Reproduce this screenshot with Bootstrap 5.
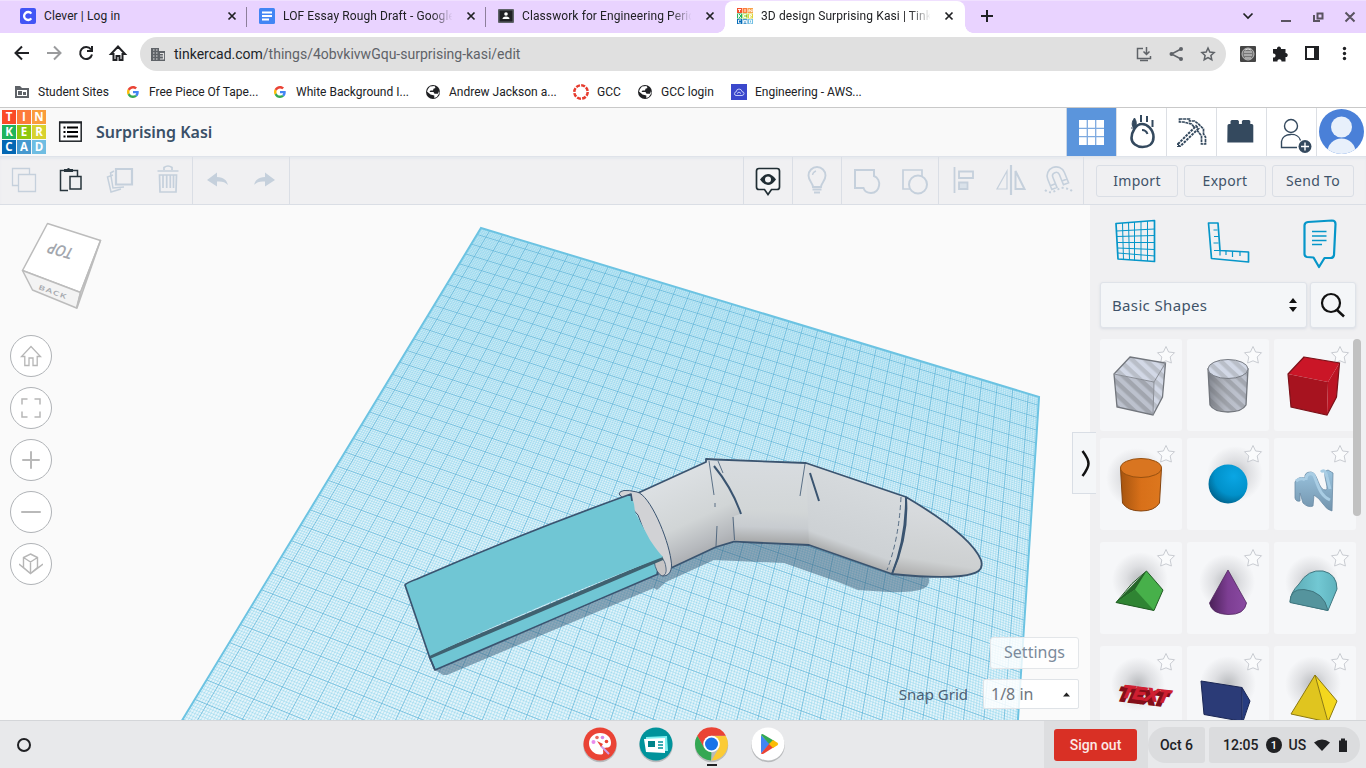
<!DOCTYPE html>
<html lang="en">
<head>
<meta charset="utf-8">
<meta name="viewport" content="width=device-width, initial-scale=1">
<title>3D design Surprising Kasi | Tinkercad</title>
<link href="https://cdn.jsdelivr.net/npm/bootstrap@5.3.0/dist/css/bootstrap.min.css" rel="stylesheet">
<style>
body{font-family:Roboto,sans-serif;font-size:12px;line-height:16px;color:#202124;height:768px;overflow:hidden;background:#fff}
svg{display:block;flex:none}
.tabstrip{height:33px;background:#e9d3ff;border-top:1px solid #f0e0ff;padding-left:8px}
.tab{width:239px;padding:0 7px 2px 12px;position:relative}
.tab .label{flex:1;white-space:nowrap;overflow:hidden;letter-spacing:.1px;mask-image:linear-gradient(90deg,#000 86%,transparent 98%);-webkit-mask-image:linear-gradient(90deg,#000 86%,transparent 98%);margin-right:7px}
.tab .label.full{mask-image:none;-webkit-mask-image:none}
.tab.divided::after{content:"";position:absolute;right:0;top:6px;height:20px;width:1px;background:#8d7f9b}
.tab.active-tab{background:#fff;border-radius:8px 8px 0 0;width:240px;padding-right:8px}
.tab.active-tab::before,.tab.active-tab::after{content:"";position:absolute;bottom:0;width:8px;height:8px}
.tab.active-tab::before{left:-8px;background:radial-gradient(circle at 0 0,transparent 7.5px,#fff 8px)}
.tab.active-tab::after{right:-8px;background:radial-gradient(circle at 100% 0,transparent 7.5px,#fff 8px)}
.addressbar{height:42px;padding-left:12px}
.omni{width:1086px;height:34px;border-radius:17px;background:#e0e0e0;font-size:14px;color:#5f6368;padding:0 9px 0 10px}
.bookmarks{height:32px;display:grid;grid-template-columns:111px 147px 153px 148px 64px 94px 140px;padding-left:14px;align-items:center;padding-top:3px;padding-bottom:1px}
.apphead{height:49px;background:#f9f9f9;border-top:1px solid #c9c9c9;font-family:"Noto Sans",sans-serif}
.logo{display:grid;grid-template-columns:repeat(3,14px);grid-auto-rows:14px;gap:1px;margin-left:2px;width:44px}
.logo b{color:#fff;font:700 11.5px/14px "Open Sans",sans-serif;text-align:center}
.ttl{font-size:16px;font-weight:600;color:#3a5068;line-height:22px;letter-spacing:0;margin-left:14px}
.hb{width:50px;height:48px;background:#fff;border-left:1px solid #dcdfe4}
.hb.on{background:#5b95dc;border-left:1px solid #c9d6e6}
.toolrow{height:49px;background:#f0f0f2;border-bottom:1px solid #dadee5;border-top:1px solid #dfe3ea;font-family:"Noto Sans",sans-serif;color:#c5d0dc;box-shadow:inset 0 2px 2px #e6e9ee}
.tg{border-right:1px solid #dadee5}
.tg>svg{width:48px;height:47px}
.tbtn{font-size:14px;line-height:20px;color:#3f5369;border:1px solid #dadee5;border-radius:3px;height:32px;padding:0;background:#f0f0f2;width:82px;letter-spacing:.3px}
.stage{height:515px;background:#fafafa;font-family:"Noto Sans",sans-serif}
.view{width:1090px;position:relative;overflow:hidden}
.navs{position:absolute;left:10px;top:130px;gap:10px}
.nb{width:42px;height:42px;border:1px solid #b0b3b7;border-radius:50%;background:#fff;display:grid;place-items:center}
.collapser{position:absolute;left:1072px;top:227px;width:24px;height:62px;background:#f4f6f8;border:1px solid #d9dee5;border-right:0;z-index:3}
.snap{position:absolute;right:11px;top:432px;font-size:16px;color:#4b5f74}
.snap .setb{width:89px;height:32px;background:rgba(255,255,255,.8);border:1px solid #e3e6e9;border-radius:3px;color:#7b8a9b;line-height:28px;text-align:center}
.snap .inp{width:96px;height:30px;background:rgba(255,255,255,.85);border:1px solid #dfe3e7;border-radius:2px;line-height:28px;color:#707780;padding:0 8px 0 7px}
.side{width:276px;background:#f0f0f2;padding-left:10px;position:relative;overflow:hidden}
.selbox{width:207px;height:46px;background:#f4f6f8;border:1px solid #dfe3e9;border-radius:3px;box-shadow:0 1px 3px #d8dce3;font-size:15px;line-height:20px;color:#3f5369;padding:0 8px 0 11px;letter-spacing:.35px}
.srch{width:46px;height:46px;background:#f4f6f8;border:1px solid #dfe3e9;border-radius:3px;box-shadow:0 1px 3px #d8dce3}
.shapes{display:grid;grid-template-columns:repeat(3,82px);grid-template-rows:92px 92px 92px 92px;column-gap:5px;row-gap:12px}
.shapes>div{background:#f6f7f9;border-radius:3px}
.shapes>div:nth-child(-n+3){margin-bottom:0}
.shapes.first{grid-template-rows:92px;margin-bottom:7px}
.sbar{position:absolute;left:263px;top:134px;width:8px;height:177px;border-radius:4px;background:#c1c1c1}
.shelf{height:48px;background:#e8e9eb;border-top:1px solid #d4d6d9;font-size:14px;font-weight:500;line-height:20px}
.signarea{background:#dddee0;width:104px;padding-left:10px}
.signout{width:83px;height:32px;background:#d93025;color:#fce8e6;border-radius:3px;text-align:center;line-height:32px}
.pill{background:#dbdcde;height:36px}
.apps{margin-left:559px;gap:20px}
</style>
</head>
<body class="d-flex flex-column">
<svg width="0" height="0" class="position-absolute"><defs>
<symbol id="x" viewBox="0 0 16 16"><path d="M4.5 4.5l7 7M11.500 4.500l-7 7" stroke="#202124" stroke-width="1.700"/></symbol>
<symbol id="g" viewBox="0 0 48 48"><path fill="#EA4335" d="M24 9.500c3.540 0 6.710 1.220 9.210 3.600l6.850-6.850C35.900 2.380 30.470 0 24 0 14.620 0 6.510 5.380 2.560 13.220l7.980 6.190C12.430 13.720 17.740 9.500 24 9.500z"/><path fill="#4285F4" d="M46.980 24.550c0-1.570-.15-3.090-.38-4.550H24v9.020h12.940c-.58 2.960-2.260 5.480-4.780 7.180l7.730 6c4.510-4.180 7.090-10.360 7.090-17.650z"/><path fill="#FBBC05" d="M10.530 28.590A14.500 14.500 0 0 1 9.770 24c0-1.600.27-3.140.76-4.590l-7.980-6.190A23.900 23.900 0 0 0 0 24c0 3.880.92 7.540 2.560 10.780z"/><path fill="#34A853" d="M24 48c6.480 0 11.930-2.130 15.890-5.810l-7.730-6c-2.150 1.450-4.920 2.300-8.160 2.300-6.260 0-11.570-4.220-13.470-9.910l-7.980 6.190C6.510 42.620 14.620 48 24 48z"/></symbol>
<symbol id="globe" viewBox="0 0 16 16"><circle cx="8" cy="8" r="7" fill="#202124"/><path d="M5 2.500L9.500 2l1 2-2 .7-.5 1.800H5.500L4.500 8h4l1 1.700h3.600L14 7l.5 2-2.700 4-2.500 1v-2.500L5.500 10.500 2 7.500 3 5z" fill="#fff"/></symbol>
<symbol id="star" viewBox="0 0 20 20"><path d="M10 1.500l2.600 5.500 5.900.7-4.300 4.300L15.400 18 10 15.800 4.600 18l1.200-6L1.500 7.700l5.900-.7z" fill="#fafbfc" stroke="#c9ccd2" stroke-width="1"/></symbol>
<pattern id="hole" width="9" height="9" patternUnits="userSpaceOnUse" patternTransform="rotate(-47)"><rect width="9" height="9" fill="#a1a5ae"/><rect width="4.500" height="9" fill="#bcc1cd"/></pattern>
<pattern id="holeL" width="9" height="9" patternUnits="userSpaceOnUse" patternTransform="rotate(-47)"><rect width="9" height="9" fill="#b9bec8"/><rect width="4.500" height="9" fill="#d2d8e6"/></pattern>
<radialGradient id="sh"><stop offset="0" stop-color="#b9bbbe"/><stop offset=".5" stop-color="#dedfe2"/><stop offset="1" stop-color="#f6f7f9"/></radialGradient>
<linearGradient id="or"><stop offset="0" stop-color="#a5540f"/><stop offset=".5" stop-color="#d87019"/><stop offset="1" stop-color="#dd771e"/></linearGradient>
<linearGradient id="pu"><stop offset="0" stop-color="#4b2158"/><stop offset=".5" stop-color="#7d3e93"/><stop offset="1" stop-color="#8a4aa2"/></linearGradient>
<linearGradient id="te"><stop offset="0" stop-color="#5ba8b2"/><stop offset=".6" stop-color="#72c8d3"/><stop offset="1" stop-color="#5fb2bd"/></linearGradient>
<linearGradient id="cy"><stop offset="0" stop-color="#60646c" stop-opacity=".65"/><stop offset=".5" stop-color="#888" stop-opacity=".1"/><stop offset="1" stop-color="#fff" stop-opacity="0"/></linearGradient>
<linearGradient id="sq" x2="0" y2="1"><stop offset="0" stop-color="#9ac4df"/><stop offset="1" stop-color="#7394ad"/></linearGradient>
<radialGradient id="bl" cx=".65" cy=".3" r=".75"><stop offset="0" stop-color="#0aa6e4"/><stop offset=".65" stop-color="#0191ca"/><stop offset="1" stop-color="#00638d"/></radialGradient>
</defs></svg>

<div class="tabstrip d-flex flex-none">
  <div class="tab divided d-flex align-items-center"><svg width="16" height="16"><rect width="16" height="16" rx="2" fill="#4255f5"/><path d="M11.300 5.600A4 4 0 1 0 11.300 10.400" fill="none" stroke="#fff" stroke-width="2.300"/></svg><span class="label full ms-2">Clever | Log in</span><svg width="16" height="16"><use href="#x"/></svg></div>
  <div class="tab divided d-flex align-items-center"><svg width="16" height="16"><rect width="16" height="16" rx="1.500" fill="#4285f4"/><path d="M3 4.500h10M3 8h10M3 11.500h7" stroke="#fff" stroke-width="1.800"/></svg><span class="label ms-2">LOF Essay Rough Draft - Google Docs</span><svg width="16" height="16"><use href="#x"/></svg></div>
  <div class="tab d-flex align-items-center"><svg width="16" height="16"><rect y="1" width="16" height="14" rx="1" fill="#5f6368"/><rect x="1.500" y="2.500" width="13" height="11" fill="#202124"/><circle cx="8" cy="6" r="1.800" fill="#fff"/><path d="M4.500 11q0-2.500 3.500-2.500t3.500 2.500z" fill="#fff"/></svg><span class="label ms-2">Classwork for Engineering Period 4</span><svg width="16" height="16"><use href="#x"/></svg></div>
  <div class="tab active-tab d-flex align-items-center"><svg width="16" height="16"><path fill="#f2512e" d="M0 0h5v5H0z"/><path fill="#fc7e3b" d="M5.500 0h5v5h-5z"/><path fill="#f8a24a" d="M11 0h5v5h-5z"/><path fill="#27b35f" d="M0 5.500h5v5H0z"/><path fill="#92c81e" d="M5.500 5.500h5v5h-5z"/><path fill="#ddd43b" d="M11 5.500h5v5h-5z"/><path fill="#066cb8" d="M0 11h5v5H0z"/><path fill="#4a9bd0" d="M5.500 11h5v5h-5z"/><path fill="#72bfe3" d="M11 11h5v5h-5z"/><path d="M1 1.500h3M2.500 1.500V4M8 1v3M12 4V1.500L15 4V1M1.500 6v4M4 6L2 8l2 2M9.500 6.500h-3v3h3M6.500 8h2.500M12.500 10V6.500h2v1.500h-2l2 2M4 12H1.500v3H4M6.500 15.500v-3h3v3M6.500 14h3M12.500 12h2v3h-2z" fill="none" stroke="#fff" stroke-width=".9"/></svg><span class="label ms-2">3D design Surprising Kasi | Tinkercad</span><svg width="16" height="16"><use href="#x"/></svg></div>
  <svg width="401" height="32" viewBox="965 1 401 32"><path d="M981 16h12M987 10v12" stroke="#202124" stroke-width="2"/><path d="M1243.500 13.500l4.500 4.500 4.500-4.500" fill="none" stroke="#202124" stroke-width="1.700"/><path d="M1281 21h10M1314 15v6h6M1317.500 13.500h5v5h-5zM1345.500 12.500l9 9M1354.500 12.500l-9 9" fill="none" stroke="#5a5360" stroke-width="2"/></svg>
</div>

<div class="addressbar d-flex align-items-center">
  <svg width="128" height="42" viewBox="12 33 128 42"><g fill="none" stroke="#202124" stroke-width="2"><path d="M29 53H16M22 46.500L15.500 53l6.500 6.500"/><path stroke="#9a9b9d" d="M47 53h13M54 46.500l6.500 6.500-6.500 6.500"/><path d="M91 49.500A6 6 0 1 0 92 54.500M92 46v5h-5"/><path d="M113.500 60v-6h-2.500l7-7.500 7 7.500h-2.500v6h-3v-4h-3v4z"/></g></svg>
  <div class="omni d-flex align-items-center"><svg width="16" height="16" viewBox="0 0 16 16"><path fill="#5f6368" d="M1 2h8v3h6v10H1z"/><path d="M3 4h1.500M6 4h1.500M3 7h1.500M6 7h1.500M3 10h1.500M6 10h1.500M3 13h1.500M6 13h1.500M10 7.500h3.500v5.500H10M10 10h3.500" fill="none" stroke="#e0e0e0" stroke-width="1.200"/></svg><span class="flex-grow-1" style="padding-left:8px"><span class="text-dark">tinkercad.com</span>/things/4obvkivwGqu-surprising-kasi/edit</span>
  <svg width="82" height="18" viewBox="1135 45 82 18"><g fill="none" stroke="#5f6368" stroke-width="1.500"><path d="M1143 48.500h-5.500v10h13v-2.500M1140 60.500h8M1146.500 47v7M1143.500 51.500l3 3 3-3"/><path d="M1181 49l-9.500 5 9.500 5"/><path d="M1208 48l1.800 4 4.300.5-3.200 2.900.9 4.300-3.800-2.200-3.800 2.200.9-4.300-3.200-2.900 4.300-.5z"/></g><g fill="#5f6368"><circle cx="1181" cy="49" r="2"/><circle cx="1171.500" cy="54" r="2"/><circle cx="1181" cy="59" r="2"/></g></svg></div>
  <svg width="140" height="42" viewBox="1226 33 140 42"><rect x="1240" y="46" width="16" height="16" rx="1" fill="#454545"/><circle cx="1248" cy="54" r="6" fill="#777" stroke="#bbb"/><path d="M1244 52h8M1244 55h8M1245 58h6M1245 50q3-2 6 0" stroke="#ddd" fill="none"/><path fill="#202124" d="M1273 49h4c-.5-3.500 4.500-3.500 4 0h4.500v4c3-.3 3 4.500 0 4v4.500h-4c.3-3-4.500-3-4 0H1273v-4c3.500.5 3.500-4.500 0-4z"/><path d="M1306 47h12v12h-12z" fill="#fff" stroke="#202124" stroke-width="2"/><path d="M1314 47h4v12h-4z" fill="#202124"/><g fill="#202124"><circle cx="1344.500" cy="48.500" r="1.700"/><circle cx="1344.500" cy="53.500" r="1.700"/><circle cx="1344.500" cy="58.500" r="1.700"/></g></svg>
</div>

<div class="bookmarks">
  <div class="d-flex gap-2"><svg width="16" height="16"><path d="M1 2h5l2 2h7v10H1z" fill="#5f6368"/><path d="M3 6h10v6H3z" fill="#fff"/><path d="M4 7h4v4H4zM9 8h3v3H9z" fill="#5f6368"/></svg><span>Student Sites</span></div>
  <div class="d-flex gap-2"><svg width="16" height="16"><use href="#g" x="2" y="2" width="12" height="12"/></svg><span>Free Piece Of Tape...</span></div>
  <div class="d-flex gap-2"><svg width="16" height="16"><use href="#g" x="2" y="2" width="12" height="12"/></svg><span>White Background I...</span></div>
  <div class="d-flex gap-2"><svg width="16" height="16"><use href="#globe"/></svg><span>Andrew Jackson a...</span></div>
  <div class="d-flex gap-2"><svg width="16" height="16"><circle cx="8" cy="8" r="6.700" fill="none" stroke="#e63b2e" stroke-width="2.500" stroke-dasharray="4 1.260"/></svg><span>GCC</span></div>
  <div class="d-flex gap-2"><svg width="16" height="16"><use href="#globe"/></svg><span>GCC login</span></div>
  <div class="d-flex gap-2"><svg width="16" height="16"><rect width="16" height="16" fill="#3b48cc"/><path d="M5 11.500h6q2-.3 2-2t-2-1.900Q10.500 5 8 5T5.300 7.700Q3.500 8 3.500 9.700T5 11.500zM6 9.500l2-1.500 2 1.500" fill="none" stroke="#c5cdf8"/></svg><span>Engineering - AWS...</span></div>
</div>

<div class="apphead d-flex align-items-center">
  <div class="logo" id="logo"></div>
  <svg class="ms-2" width="32" height="32" viewBox="54 115 32 32"><rect x="59.700" y="121.200" width="21.500" height="19" fill="#fff" stroke="#202428" stroke-width="1.500"/><path d="M59 121.500h23" stroke="#202428" stroke-width="2"/><path d="M67 126.500h11M67 131h11M67 135.500h11M63.500 126.500h2M63.500 131h2M63.500 135.500h2" stroke="#000" stroke-width="2"/></svg>
  <span class="ttl me-auto" id="ttl" style="margin-left:10px">Surprising Kasi</span>
  <div class="hb on"><svg width="49" height="48"><path d="M12 12h25v25H12z" fill="#fff"/><path d="M20.300 12v25M28.700 12v25M12 20.300h25M12 28.700h25" stroke="#7eaae0" stroke-width="1.300"/></svg></div>
  <div class="hb"><svg width="49" height="48" viewBox="1117 108 49 48"><path d="M1142 124c5 0 11.500 5.500 11.500 13s-5.500 10-11 10-11-3.500-11-9 4-14 10.500-14z" fill="none" stroke="#34495e" stroke-width="2.600"/><path d="M1142 130q4 0 5.500 4M1141 115v7M1147 116v6M1152.500 120v7" stroke="#34495e" stroke-width="2" fill="none"/><path d="M1134.500 118c-3 4-3 8-.5 10 3-2 3-6 .5-10zM1131 128h5" fill="#34495e" stroke="#34495e"/></svg></div>
  <div class="hb"><svg width="49" height="48" viewBox="1167 108 49 48"><path d="M1179.500 119h10v2h5l4 3 5 5v5l2 3v7h-4v-8l-3-4-7-8-8-2h-4z" fill="#fff" stroke="#34495e" stroke-width="1.700" stroke-dasharray="3 .6"/><path d="M1178 144l18-18 2.500 2.500-18 17.500h-2.500z" fill="#fff" stroke="#34495e" stroke-width="2" stroke-dasharray="2.600 1"/></svg></div>
  <div class="hb"><svg width="49" height="48" viewBox="1217 108 49 48"><path d="M1228 126q0-1.500 1.500-1.500h1.500v-3l1.200-1h6l1.200 1v3h3v-3l1.200-1h6l1.200 1v3h1.500q1.500 0 1.500 1.500v17h-26z" fill="#34495e" transform="translate(-.5 -.5)"/></svg></div>
  <div class="hb"><svg width="49" height="48" viewBox="1267 108 49 48"><g fill="none" stroke="#34495e" stroke-width="1.400"><circle cx="1291" cy="126" r="6.500"/><path d="M1297 147.500h-15.500v-6c1-9 17-9.500 19-1"/></g><circle cx="1305" cy="146.500" r="6.500" fill="#34495e"/><path d="M1301 146.500h8M1305 142.500v8" stroke="#fff" stroke-width="1.400"/></svg></div>
  <div class="hb"><svg width="49" height="48" viewBox="1317 108 49 48"><clipPath id="av"><circle cx="1341.500" cy="131.500" r="22.500"/></clipPath><g clip-path="url(#av)"><path fill="#4a80d8" d="M1317 108h49v48h-49z"/><circle cx="1341.500" cy="127" r="10.500" fill="#e8f0fb"/><ellipse cx="1341.500" cy="152" rx="14" ry="13.500" fill="#e8f0fb"/></g></svg></div>
</div>

<div class="toolrow d-flex">
  <div class="tg d-flex">
    <svg viewBox="0 157 48 47"><path d="M12.500 168.500h17v17h-17z" fill="none" stroke="#c5d0dc" stroke-width="1.300"/><path d="M18.500 174.500h17v17h-17z" fill="#f0f0f2" stroke="#c5d0dc" stroke-width="1.300"/></svg>
    <svg viewBox="48 157 48 47"><path d="M68 190.500h-7.500v-20h17v6M70 176.500h11v12.500H70z" fill="none" stroke="#27343c" stroke-width="1.500"/><path d="M64 172v-3h3q1.500-2 3 0h3v3z" fill="#27343c"/></svg>
    <svg viewBox="96 157 48 47"><path d="M113 175l-5.500 2 3.500 15 10-3M114 171l-3.500 2 2.500 15 11-1" fill="none" stroke="#c5d0dc" stroke-width="1.500"/><path d="M116 169h16v15.500h-16z" fill="#f0f0f2" stroke="#c5d0dc" stroke-width="2.200"/></svg>
    <svg viewBox="144 157 48 47"><path d="M157.500 171h21M164 170v-2.500q4-3 8 0v2.500M159.500 175l.5 17h16l.5-17z M163 175v13M166.700 175v13M170.300 175v13M173.500 175v13" fill="none" stroke="#c5d0dc" stroke-width="1.700"/></svg>
  </div>
  <div class="tg d-flex">
    <svg viewBox="193 157 48 47"><path d="M207 180l10-7.500v4.500c7 .5 10 3.500 11 8-3-3-6-4-11-3.500v5z" fill="#c5d0dc"/></svg>
    <svg viewBox="241 157 48 47"><path d="M275 180l-10-7.500v4.500c-7 .5-10 3.500-11 8 3-3 6-4 11-3.500v5z" fill="#c5d0dc"/></svg>
  </div>
  <div class="tg flex-grow-1"></div>
  <div class="tg d-flex"><svg viewBox="744 157 48 47"><path d="M759 168.500h18q2.500 0 2.500 2.500v16q0 2.500-2.500 2.500h-5.500l-3.500 5-3.500-5H759q-2.500 0-2.500-2.500v-16q0-2.500 2.500-2.500z" fill="#f5f6f7" stroke="#202e34" stroke-width="1.700"/><path d="M760 179.500q8-11 16 0-8 11-16 0z" fill="#202e34"/><circle cx="768" cy="179.500" r="3" fill="#f5f6f7"/></svg></div>
  <div class="tg d-flex"><svg viewBox="793 157 48 47"><path d="M813 187c0-4-4.500-6-4.500-11.500a8.500 8.500 0 0 1 17 0c0 5.500-4.500 7.500-4.500 11.500zM812.500 189.500h9M814 192.500h6" fill="none" stroke="#c5d0dc" stroke-width="1.900"/><path d="M812.500 175q.5-3 3.500-4" fill="none" stroke="#c5d0dc" stroke-width="1.400"/></svg></div>
  <div class="tg d-flex">
    <svg viewBox="842 157 48 47"><path d="M855 170h19v6c8 3 6.500 17-3 17-4 0-6.500-2-7.500-5H855z" fill="none" stroke="#c5d0dc" stroke-width="2"/></svg>
    <svg viewBox="891 157 48 47"><path d="M904 170h19v19h-19z" fill="none" stroke="#c5d0dc" stroke-width="1.700"/><circle cx="919" cy="184.500" r="9" fill="#f0f0f2" stroke="#c5d0dc" stroke-width="2"/></svg>
  </div>
  <div class="tg d-flex">
    <svg viewBox="939 157 48 47"><path d="M954.500 167v26M959 171.500h14v6.500h-14z" fill="none" stroke="#c5d0dc" stroke-width="1.800"/><path d="M959 182.500h8.500v6.500H959z" fill="#dae2ea" stroke="#c5d0dc" stroke-width="1.800"/></svg>
    <svg viewBox="987 157 48 47"><path d="M1011 165v30" stroke="#c5d0dc" stroke-width="2.200"/><path d="M1007 171v18h-10z" fill="none" stroke="#c5d0dc" stroke-width="1.200"/><path d="M1015.500 171v18h9z" fill="none" stroke="#c5d0dc" stroke-width="2"/></svg>
    <svg viewBox="1035 157 48 47"><g transform="rotate(-22 1056 177)" fill="none" stroke="#c5d0dc" stroke-width="1.600"><path d="M1047.500 187v-11a9 9 0 0 1 18 0v11h-5.500v-11q0-3.500-3.500-3.500t-3.500 3.500v11zM1047.500 183h5.500M1060 183h5.500"/></g><path d="M1045 190c8 7 14-5 20-1.500q5 0 8 3.500" fill="none" stroke="#c5d0dc" stroke-width="2" stroke-dasharray="2 2.500"/></svg>
  </div>
  <div class="d-flex align-items-center ps-2" style="width:282px;gap:6px"><button class="tbtn ms-1">Import</button><button class="tbtn">Export</button><button class="tbtn">Send To</button></div>
</div>

<div class="stage d-flex position-relative">
  <div class="view">
    <svg width="1090" height="515" viewBox="0 205 1090 515">
      <defs><linearGradient id="t1" gradientUnits="userSpaceOnUse" x1="674" y1="477" x2="710" y2="555"><stop offset="0" stop-color="#dce0e3"/><stop offset=".55" stop-color="#d1d5d6"/><stop offset=".85" stop-color="#b6b9bd"/><stop offset="1" stop-color="#a7a9ac"/></linearGradient>
      <linearGradient id="t2" gradientUnits="userSpaceOnUse" x1="770" y1="460" x2="767" y2="544"><stop offset="0" stop-color="#d8dce0"/><stop offset=".6" stop-color="#d2d6d7"/><stop offset=".8" stop-color="#c8ccd0"/><stop offset="1" stop-color="#a4a5a5"/></linearGradient>
      <linearGradient id="t3" gradientUnits="userSpaceOnUse" x1="865" y1="482" x2="838" y2="556"><stop offset="0" stop-color="#d6dadd"/><stop offset=".82" stop-color="#cdd1d4"/><stop offset="1" stop-color="#a9aaaa"/></linearGradient>
      <linearGradient id="t4" gradientUnits="userSpaceOnUse" x1="940" y1="515" x2="930" y2="577"><stop offset="0" stop-color="#d7dadd"/><stop offset=".75" stop-color="#cdd0d1"/><stop offset="1" stop-color="#b0b0b0"/></linearGradient></defs>
      <g id="plane"></g>
      <path d="M435 670l8 5 4 0 207-87 3 2 9-8 48-22 70 3 54 19 20 8 30 2q30 1 38-5 4-3 3-9L893 570 809 543 725 543 600 600z" fill="#3f5f7a" fill-opacity=".52"/>
      <g stroke="#3a5470" stroke-linejoin="round">
      <path d="M632 496l74-35 0-3 10 1 24 54-5 28-19 6-45 21z" fill="url(#t1)" stroke="none"/>
      <path d="M706 458l100 5 8 20-4 62-75-3-1-26 7-2z" fill="url(#t2)" stroke="none"/>
      <path d="M806 463l100 34-3 42-11 35-83-29z" fill="url(#t3)" stroke="none"/>
      <path d="M906 497C945 520 974 543 981 560c3 10-3 14-20 16-18 2-40 1-69-2q14-35 14-77z" fill="url(#t4)" stroke-width="1.800"/>
      <path d="M638 493l68-31 0-3 9 .5 91 3.500 100 34M892 574l-83-29-75-3.300-18 5.300-45 21" fill="none" stroke-width="1.800"/>
      <path d="M619 494q1-6 18-2c13 3 31 46 34 68 2 11-2 16-8 16-5-1-7-8-8-16L638 515z" fill="#d1d2d5" stroke-width="1"/>
      <path d="M654 560l4 15M658 561l1 9" fill="none" stroke-width="1.500"/>
      <path d="M714 466q18 22 27 48M810 473l9 28" fill="none" stroke-width="2"/><path d="M709 461l5 34M718 461l5 12M715 503v4M733 517l1.500 23M805 464l-5 32M716 546l1-20" fill="none" stroke-width=".8"/><path d="M901 497q-2 42-14 73" fill="none" stroke-width=".8" stroke-dasharray="5 3"/>
      <path d="M906 497q3 38-14 77" fill="none" stroke-width="1.800"/>
      <path d="M429.500 657L660 559l-3 15.500L435 670z" fill="#70c6d4" stroke-width="1.700"/>
      <path d="M654 561q2 12 8 15 5-1 4-8-1-8-4-9z" fill="#c6c4c5" stroke-width=".8"/>
      <path d="M429.500 657L663 558" stroke="#3f6170" stroke-width="4"/>
      <path d="M405 585q0-1 12-6Q520 534 631 494l3 10 1 8 15 28q8 12 13 17Q540 604 429.500 656z" fill="#70c6d4" stroke="none"/>
      <path d="M632 501l-1-7Q520 534 417 579q-11 4-12 6l24.500 72 5.500 13" fill="none" stroke-width="1.700"/>
      </g>
      <g stroke="#bcbcbc" stroke-width="1.500" stroke-linejoin="round"><path d="M47.500 223.500l53 17-20 52-58-22z" fill="#fff"/><path d="M22.500 270.500l58 22-4 15.500-44-18z" fill="#f3f3f3"/><path d="M100.500 240.500L77 308l3.500-15.500z" fill="#ddd"/></g>
      <text transform="matrix(-.93 -.28 -.25 .88 74 262)" font-size="0"></text>
      <text transform="translate(75 249) rotate(196) skewX(-12)" font-size="16" font-weight="600" fill="#a3a7ae" textLength="25" lengthAdjust="spacingAndGlyphs">TOP</text>
      <text transform="translate(38 289) rotate(20) scale(1 .65)" font-size="10" font-weight="600" fill="#a8abb0" textLength="29">BACK</text>
    </svg>
    <div class="navs d-flex flex-column">
      <div class="nb"><svg width="24" height="24"><path d="M12 2.500l9.500 10h-3.300v9h-4.200v-7.500h-4v7.500H5.800v-9H2.500z" fill="none" stroke="#b6b6b6" stroke-width="1.300"/></svg></div>
      <div class="nb"><svg width="24" height="24"><path d="M3 8.500V3h5.500M15.500 3H21v5.500M21 15.500V21h-5.500M8.500 21H3v-5.500" fill="none" stroke="#b6b6b6" stroke-width="1.500"/></svg></div>
      <div class="nb"><svg width="24" height="24"><path d="M4 12h16M12 4v16" stroke="#b9b9b9" stroke-width="2" stroke-linecap="round"/></svg></div>
      <div class="nb"><svg width="24" height="24"><path d="M3 12h18" stroke="#b9b9b9" stroke-width="2" stroke-linecap="round"/></svg></div>
      <div class="nb"><svg width="24" height="24"><path d="M11.500 2l7 3.500v10l-7 6-7-6v-10zM4.500 5.500l7 4.500 7-4.500M11.500 10v11.500M0 12l11.500 9.500L24 12" fill="none" stroke="#b6b6b6" stroke-width="1.400"/></svg></div>
    </div>
    <div class="snap">
      <div class="setb ms-auto">Settings</div>
      <div class="d-flex align-items-center" style="margin-top:10px;gap:15px"><span style="font-size:15px">Snap Grid</span><div class="inp d-flex align-items-center justify-content-between"><span>1/8 in</span><svg width="7" height="5"><path d="M0 4.500L3.500.5 7 4.500z" fill="#222"/></svg></div></div>
    </div>
  </div>
  <div class="side">
    <svg width="266" height="77" viewBox="1100 205 266 77"><g fill="none" stroke="#0696c9" stroke-width="1.700" stroke-linejoin="round"><path d="M1116 223.500l38.500-3v41l-36.500-2.500z"/><path d="M1116.500 231l38-2M1116.500 236.500l38-1M1117 242.500h37.500M1117.500 248l37 1.500M1118 253l37 3M1122.500 223l1 37M1128.500 222.500l1 37.500M1134.500 222v38.500M1141 221.500v39M1147.500 221v40" stroke-width="1"/><path d="M1208.500 223h9.500l2 27.500 28.500 1.500v10l-37-3.500z"/><path d="M1214 250.500h6v5M1213.500 230h4M1214 236.500h5M1213.500 243h5M1226 251v4M1232.500 251v6M1240 252v4" stroke-width="1.200"/><path d="M1308 222.500l24-1.500q3.500 0 3.500 3.500l-1.500 31q-.5 3-3.500 3h-6l-5.500 9-5.500-9.500-6.500-.5q-2.500-.5-2.500-3v-28.500q0-3 3.500-3.500z" transform="translate(0 -.5)" stroke-width="2.200"/><path d="M1312 231.500h14.500M1312 236h14.500M1312 240.500h14.500M1312 244.500h10"/></g></svg>
    <div class="d-flex" style="gap:3px"><div class="selbox d-flex align-items-center justify-content-between"><span>Basic Shapes</span><svg width="10" height="16"><path d="M1 6l4-5 4 5zM1 10l4 5 4-5z" fill="#111"/></svg></div><div class="srch"><svg width="44" height="44"><circle cx="20" cy="20" r="9" fill="none" stroke="#111" stroke-width="2.200"/><path d="M26 27l7 6.500" stroke="#111" stroke-width="2.500"/></svg></div></div>
    <div class="shapes first" style="margin-top:11px">
      <div><svg width="82" height="92"><use href="#star" x="56" y="6" width="20" height="20"/><path d="M30 18l35.500 6-11.500 19L14 35z" fill="url(#holeL)"/><path d="M14 35l40 8-1 33-36-8z" fill="url(#hole)"/><path d="M54 43l11.500-19-3 34L53 76z" fill="url(#holeL)"/><path d="M30 18l35.500 6-3 34L53 76l-36-8-3-33z" fill="none" stroke="#72767d" stroke-width="1.300"/><path d="M14 35l40 8 11.500-19M54 43l-1 33" fill="none" stroke="#8a8e96"/></svg></div>
      <div><svg width="82" height="92"><use href="#star" x="56" y="6" width="20" height="20"/><path d="M21 30l2 36q4 7 18 7t18-7l2-36z" fill="url(#hole)"/><path d="M21 30l2 36q4 7 18 7t18-7l2-36z" fill="url(#cy)" stroke="#72767d" stroke-width="1.300"/><ellipse cx="41" cy="30" rx="20" ry="9.500" fill="url(#holeL)" stroke="#777b83"/></svg></div>
      <div><svg width="82" height="92"><use href="#star" x="56" y="6" width="20" height="20"/><path d="M30 18l35.500 6-11.500 19L14 35z" fill="#ca1627"/><path d="M14 35l40 8-1 33-36-8z" fill="#a7131f"/><path d="M54 43l11.500-19-3 34L53 76z" fill="#bb1423"/><path d="M30 18l35.500 6-3 34L53 76l-36-8-3-33z" fill="none" stroke="#7c1119" stroke-width="1.200"/></svg></div>
    </div>
    <div class="shapes">
      <div><svg width="82" height="92"><circle cx="36" cy="40" r="30" fill="url(#sh)"/><use href="#star" x="56" y="6" width="20" height="20"/><path d="M20.500 30l2 35q5 8 18.500 8t18.500-8l2-35z" fill="url(#or)" stroke="#86440e"/><ellipse cx="41" cy="30" rx="20.500" ry="9.500" fill="#d97520" stroke="#98500f"/></svg></div>
      <div><svg width="82" height="92"><circle cx="48" cy="36" r="28" fill="url(#sh)"/><use href="#star" x="56" y="6" width="20" height="20"/><circle cx="41" cy="46" r="19.500" fill="url(#bl)"/></svg></div>
      <div><svg width="82" height="92"><use href="#star" x="56" y="6" width="20" height="20"/><path d="M21 44q3-6 10-4-1-6 6-6c7 0 7 19 15 18 4-2-6-19 2-20l5 3-1 38q-5-1-9-7-4-6-9-9l-1 11q-5 2-10-3l-3-10 0 8q-4 1-5-3z" fill="url(#sq)" stroke="#6b8ba6" stroke-width=".8"/><path d="M22 43q5-4 9-1M32 42c0-7 7-9 9-2 5 14 7 18 15 22M47 34q4-4 6 5l3 12" fill="none" stroke="#a9cde4" stroke-width="3"/></svg></div>
      <div><svg width="82" height="92"><circle cx="40" cy="38" r="28" fill="url(#sh)"/><use href="#star" x="56" y="6" width="20" height="20"/><path d="M46.500 29L63 48l-9 20.500L16 60.500z" fill="#47b04a"/><path d="M46.500 29L16 60.500 35 47.500z" fill="#276428"/><path d="M46.500 29L34 47.500 16 60.500z" fill="#256629"/><path d="M35 47.500L16 60.500l38 8z" fill="#2f8433"/><path d="M46.500 29L63 48l-9 20.500-38-8q11-13 16-19z" fill="none" stroke="#225d25"/></svg></div>
      <div><svg width="82" height="92"><circle cx="40" cy="40" r="28" fill="url(#sh)"/><use href="#star" x="56" y="6" width="20" height="20"/><path d="M41 28L22.500 61q2 11 18.500 11.500T59.500 61z" fill="url(#pu)" stroke="#50265e" stroke-width=".8"/></svg></div>
      <div><svg width="82" height="92"><circle cx="38" cy="40" r="27" fill="url(#sh)"/><use href="#star" x="56" y="6" width="20" height="20"/><path d="M16 60q0-9 9-18Q34 27 49 29q14 3 14 18L54 68.500z" fill="url(#te)" stroke="#407780"/><path d="M16 60.500q0-14 14-13 20 2 24 21z" fill="#55949d" stroke="#407780"/></svg></div>
      <div><svg width="82" height="92"><circle cx="38" cy="38" r="27" fill="url(#sh)"/><use href="#star" x="56" y="6" width="20" height="20"/><g font-family="Liberation Sans" font-weight="700" font-size="18" transform="translate(19 51) rotate(7) skewX(-16)"><text x="-1" y="3" fill="#830e19" stroke="#830e19" stroke-width="3" textLength="48" lengthAdjust="spacingAndGlyphs">TEXT</text><text x="1" fill="#cf1f31" stroke="#cf1f31" textLength="48" lengthAdjust="spacingAndGlyphs">TEXT</text></g></svg></div>
      <div><svg width="82" height="92"><circle cx="41" cy="38" r="28" fill="url(#sh)"/><use href="#star" x="56" y="6" width="20" height="20"/><path d="M14 35l41 6.500 1 34-39-7z" fill="#2b3b77"/><path d="M55 41.500l8 13.500-7 20z" fill="#263c80"/><path d="M14 35l41 6.500 8 13.500-7 20.500-39-7zM55 41.500v34" fill="none" stroke="#1a2654"/></svg></div>
      <div><svg width="82" height="92"><circle cx="39" cy="38" r="28" fill="url(#sh)"/><use href="#star" x="56" y="6" width="20" height="20"/><path d="M41 29L17 68l37 8z" fill="#e0c51f"/><path d="M41 29l22 26-9 21z" fill="#f4d71e"/><path d="M41 29l22 26-9 21-37-8zM41 29l13 47" fill="none" stroke="#8c7910"/></svg></div>
    </div>
    <div class="sbar"></div>
  </div>
  <div class="collapser"><svg width="23" height="60"><path d="M9.500 18q6 8 6 12.500T9.500 43" fill="none" stroke="#111" stroke-width="2.500"/></svg></div>
</div>

<div class="shelf d-flex align-items-center">
  <svg width="24" height="24" style="margin-left:12px"><circle cx="12" cy="12" r="6" fill="none" stroke="#202124" stroke-width="2"/></svg>
  <svg style="margin-left:540px" width="216" height="47" viewBox="576 721 216 47">
    <g fill="#b9bbbd"><circle cx="600" cy="745.500" r="16.700"/><circle cx="656" cy="745.500" r="16.700"/><circle cx="711.500" cy="745.500" r="16.700"/><circle cx="768" cy="745.500" r="16.700"/></g>
    <circle cx="600" cy="744" r="16.500" fill="#ea4335"/><path d="M600 733c7 0 11 4.500 11 9.500 0 8-7 3-8 7 0 3 1.500 5-3 5-6 0-11-5-11-11s5-10.500 11-10.500z" fill="#fff"/><circle cx="593.500" cy="742" r="2" fill="#e88bed"/><circle cx="597" cy="737.500" r="1.800" fill="#ea6b60"/><circle cx="602.500" cy="737.500" r="1.800" fill="#d688e8"/><circle cx="606.500" cy="741.500" r="1.800" fill="#ea4335"/><path d="M601 746l8 8" stroke="#d49be8" stroke-width="2"/><path d="M597 741l6 3-2 3z" fill="#ea4335"/>
    <circle cx="656" cy="744" r="16.500" fill="#00939b"/><path d="M646 737l21-1 1 15H646z" fill="#7ff0f0"/><path d="M644 739l21-1v15l-19-1z" fill="#fff"/><path d="M648 741h7v6h-7z" fill="#00838a"/><path d="M658 742h5M658 745h5M658 748h5" stroke="#00939b" stroke-width="1.500"/>
    <path d="M697.200 735.700A16.500 16.500 0 0 1 726 735.700H711.500L704 748z" fill="#ea4335"/><path d="M697.200 735.700l7.100 12.400 7.200 4.200-.5 8.200A16.500 16.500 0 0 1 697.200 735.700z" fill="#34a853"/><path d="M711.500 736h14.400A16.500 16.500 0 0 1 711.500 760.500l7.200-12.200z" fill="#fbcb36"/><circle cx="711.500" cy="744" r="8.300" fill="#fff"/><circle cx="711.500" cy="744" r="6.500" fill="#1a73e8"/><path d="M707 765h10" stroke="#202124" stroke-width="2"/>
    <circle cx="768" cy="744" r="16.500" fill="#fff"/><path d="M761 735v18.500l9-9.500z" fill="#4285f4"/><path d="M761 735q1-1.500 2.500-.5l11 6.500-4.500 4z" fill="#34a853"/><path d="M761 753.500q1 1 2.500.3l11-7-4.500-3.800z" fill="#ea4335"/><path d="M773 740l4.500 2.700q1.500 1.300 0 2.600L773 748l-4-4z" fill="#fbbc04"/>
  </svg>
  <div class="signarea ms-auto d-flex align-items-center align-self-stretch"><div class="signout">Sign out</div></div>
  <div class="pill d-flex align-items-center justify-content-center" style="width:57px;border-radius:18px 3px 3px 18px">Oct 6</div>
  <div class="pill d-flex align-items-center" style="width:151px;border-radius:3px 18px 18px 3px;margin:0 6px 0 4px;padding-left:14px"><span>12:05</span><svg width="16" height="16" style="margin:0 7px"><circle cx="8" cy="8" r="8" fill="#202124"/><text x="8" y="12" text-anchor="middle" font-size="11" fill="#fff">1</text></svg><span>US</span><svg width="34" height="16" style="margin-left:8px"><path d="M0 5.500q8-6 16 0L8 14z" fill="#202124"/><path d="M25 3.500h2V1.500h4v2h2V15h-8z" fill="#202124"/></svg></div>
</div>

<script>
// Logo tiles
const tiles=[['T','#fa4a27'],['I','#fd7b39'],['N','#fa9d3b'],['K','#1eb45c'],['E','#8fc70e'],['R','#d8d22f'],['C','#0468b4'],['A','#4699cf'],['D','#6fbde2']];
document.getElementById('logo').innerHTML=tiles.map(t=>`<b style="background:${t[1]}">${t[0]}</b>`).join('');

// Workplane: project grid coordinates (u, v) to the view
const N=39.37, F=0.685;
function P(u,v){const w=1-0.00241*u-0.00893*v;return [(11.67*u-9.99*v+481)/w,(3.336*u+7.344*v+228)/w].map(n=>n.toFixed(2));}
function seg(a,b,c,d){return 'M'+P(a,b)+'L'+P(c,d);}
let fine='',major='';
const sub=7;
for(let i=0;i<=39;i++){
  for(let k=0;k<sub;k++){const t=F-1+i+k/sub;if(t>0&&t<N){const s=seg(t,0,t,N)+seg(0,t,N,t);if(k===0)major+=s;else fine+=s;}}
}
const edge='M'+P(0,0)+'L'+P(N,0)+'L'+P(N,N)+'L'+P(0,N)+'Z';
document.getElementById('plane').innerHTML=
 `<linearGradient id="pg" x1="0" y1="0" x2="0" y2="1"><stop offset="0" stop-color="#c9eaf6"/><stop offset=".3" stop-color="#e2f3fa"/><stop offset="1" stop-color="#ecf7fb"/></linearGradient>
 <path d="${edge}" fill="url(#pg)"/><path d="${fine}" stroke="#7dcdea" stroke-width=".55" fill="none" opacity=".75"/>
 <path d="${major}" stroke="#4eaed4" stroke-width=".8" fill="none" opacity=".85"/><path d="${edge}" fill="none" stroke="#6cc3e2" stroke-width="2"/>`;
</script>
<script src="https://cdn.jsdelivr.net/npm/bootstrap@5.3.0/dist/js/bootstrap.bundle.min.js"></script>
</body>
</html>
